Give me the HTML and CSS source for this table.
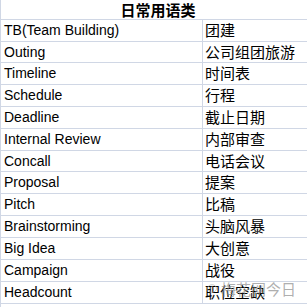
FILE: index.html
```html
<!DOCTYPE html>
<html lang="zh">
<head>
<meta charset="utf-8">
<link rel="stylesheet" href="styles.css">
</head>
<body>
<div class="sheet">
  <div class="title">日常用语类</div>
  <div class="row"><div class="en">TB(Team Building)</div><div class="zh">团建</div></div>
  <div class="row short"><div class="en">Outing</div><div class="zh">公司组团旅游</div></div>
  <div class="row"><div class="en">Timeline</div><div class="zh">时间表</div></div>
  <div class="row"><div class="en">Schedule</div><div class="zh">行程</div></div>
  <div class="row"><div class="en">Deadline</div><div class="zh">截止日期</div></div>
  <div class="row"><div class="en">Internal Review</div><div class="zh">内部审查</div></div>
  <div class="row short"><div class="en">Concall</div><div class="zh">电话会议</div></div>
  <div class="row"><div class="en">Proposal</div><div class="zh">提案</div></div>
  <div class="row"><div class="en">Pitch</div><div class="zh">比稿</div></div>
  <div class="row"><div class="en">Brainstorming</div><div class="zh">头脑风暴</div></div>
  <div class="row"><div class="en">Big Idea</div><div class="zh">大创意</div></div>
  <div class="row"><div class="en">Campaign</div><div class="zh">战役</div></div>
  <div class="row last"><div class="en">Headcount</div><div class="zh">职位空缺</div></div>
  <div class="watermark">
    <svg class="wm-icon" width="12" height="12" viewBox="0 0 12 12"><ellipse cx="5" cy="5.5" rx="4.5" ry="3.8" fill="none" stroke="#aaa" stroke-width="1"/><circle cx="3.5" cy="5" r="0.7" fill="#aaa"/><circle cx="6.5" cy="5" r="0.7" fill="#aaa"/></svg>
    <span>梅花网今日</span>
  </div>
</div>
</body>
</html>
```
FILE: styles.css
```css
html, body {
  margin: 0;
  padding: 0;
  background: #ffffff;
}
.sheet {
  position: relative;
  width: 307px;
  height: 307px;
  overflow: hidden;
  border-left: 1px solid #d0d7e5;
  box-sizing: border-box;
  font-family: "Noto Sans CJK SC", sans-serif;
  color: #000;
}
.title {
  height: 19px;
  box-sizing: border-box;
  padding-left: 8px;
  text-align: center;
  font-family: "Noto Sans CJK SC", sans-serif;
  font-weight: bold;
  font-size: 15px;
  line-height: 19px;
}
.row {
  display: flex;
  height: 22px;
  box-sizing: border-box;
  border-top: 1px solid #d0d7e5;
}
.row.short {
  height: 21px;
}
.row.last {
  border-bottom: 1px solid #d0d7e5;
  height: 23px;
}
.en {
  width: 201px;
  box-sizing: border-box;
  padding-left: 3px;
  font-family: "Liberation Sans", Arial, sans-serif;
  font-size: 14px;
  line-height: 21px;
  white-space: nowrap;
}
.zh {
  flex: 1;
  border-left: 1px solid #d0d7e5;
  padding-left: 2px;
  font-family: "Noto Sans CJK SC", sans-serif;
  font-size: 15px;
  line-height: 20px;
  white-space: nowrap;
}
.watermark {
  position: absolute;
  left: 206px;
  top: 280px;
  display: flex;
  align-items: center;
  gap: 2px;
  color: rgba(140, 140, 140, 0.7);
  font-family: "Noto Sans CJK SC", sans-serif;
  font-size: 15px;
  line-height: 17px;
}
.wm-icon {
  opacity: 0.6;
}
```
